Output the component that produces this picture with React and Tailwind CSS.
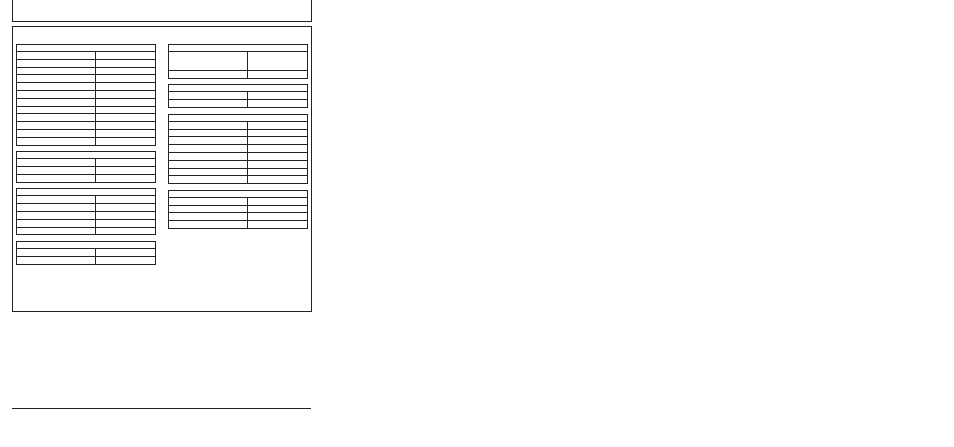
import React from "react";

const leftTables = [{ rows: 12 }, { rows: 3 }, { rows: 5 }, { rows: 2 }];
const rightTables = [{ rows: 2, tall: true }, { rows: 2 }, { rows: 8 }, { rows: 4 }];

function SpecTable({ rows, tall }) {
    return (
        <div className="border border-[#222] bg-white">
            <div className="h-[7px] border-b border-[#222]" />
            {Array.from({ length: rows }).map((_, i) => (
                <div
                    key={i}
                    className={`grid grid-cols-[79px_1fr] ${i < rows - 1 ? "border-b border-[#222]" : ""}`}
                >
                    <div className={`border-r border-[#222] ${tall && i === 0 ? "h-[18px]" : "h-[6.8px]"}`} />
                    <div />
                </div>
            ))}
        </div>
    );
}

export default function App() {
    return (
        <div className="min-h-screen bg-white font-['Liberation_Sans',sans-serif]">
            <div className="ml-[12px] w-[300px]">
                <div className="h-[22px] border-x border-b border-[#222]" />

                <div className="mt-[4px] h-[286px] border border-[#222] pl-[3px] pr-[3px] pt-[17px]">
                    <div className="flex gap-[12px]">
                        <div className="flex w-[140px] flex-col gap-[5.7px]">
                            {leftTables.map((t, i) => (
                                <SpecTable key={i} rows={t.rows} />
                            ))}
                        </div>
                        <div className="flex w-[140px] flex-col gap-[5.7px]">
                            {rightTables.map((t, i) => (
                                <SpecTable key={i} rows={t.rows} tall={t.tall} />
                            ))}
                        </div>
                    </div>
                </div>

                <div className="mt-[96px] h-px w-[299px] bg-[#222]" />
            </div>
        </div>
    );
}
